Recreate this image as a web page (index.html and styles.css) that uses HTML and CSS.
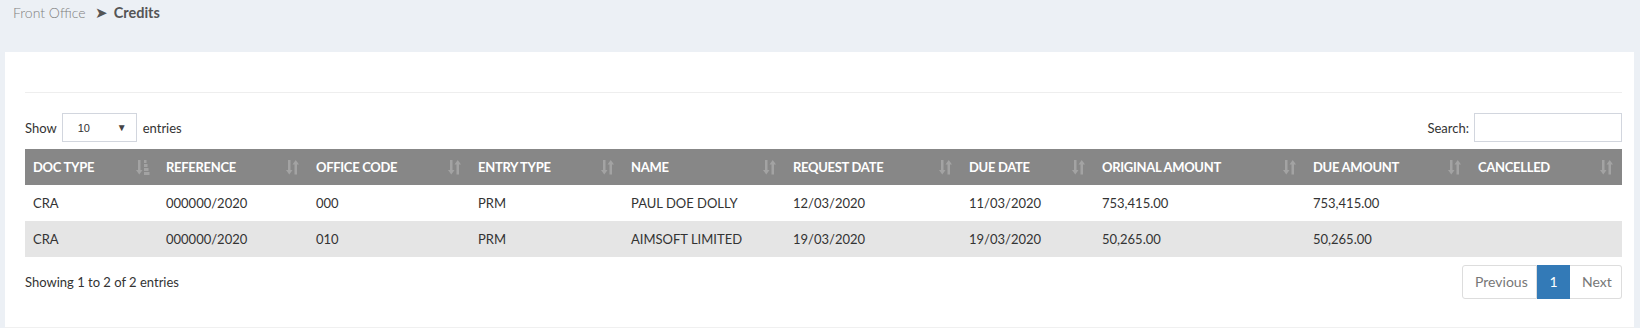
FILE: index.html
```html
<!DOCTYPE html>
<html>
<head>
<meta charset="utf-8">
<link rel="stylesheet" href="styles.css">
</head>
<body>
<div class="crumbs">
  <span class="crumb-link">Front Office</span>
  <span class="crumb-sep">&#10148;</span>
  <span class="crumb-current">Credits</span>
</div>
<div class="card">
  <div class="card-rule"></div>
  <div class="controls">
    <label class="length">Show
      <span class="select"><span>10</span><span class="caret">&#9660;</span></span>
      entries</label>
    <label class="search">Search: <span class="search-input"></span></label>
  </div>
  <table class="grid">
    <colgroup>
      <col style="width:133px"><col style="width:150px"><col style="width:162px"><col style="width:153px"><col style="width:162px"><col style="width:176px"><col style="width:133px"><col style="width:211px"><col style="width:165px"><col style="width:152px">
    </colgroup>
    <thead>
      <tr>
        <th><span>Doc Type</span><svg class="sort" viewBox="0 0 14 16"><path d="M2 1h2.5v10h2l-3.25 4.5-3.25-4.5h2z"/><rect x="8" y="1" width="2.5" height="3"/><rect x="8" y="5" width="3.5" height="3"/><rect x="8" y="9" width="4.5" height="3"/><rect x="8" y="13" width="5.5" height="3"/></svg></th>
        <th><span>Reference</span><svg class="sort" viewBox="0 0 14 16"><path d="M2 1h2.5v10h2l-3.25 4.5-3.25-4.5h2z"/><path d="M11 15.5h-2.5v-10h-2l3.25-4.5 3.25 4.5h-2z"/></svg></th>
        <th><span>Office Code</span><svg class="sort" viewBox="0 0 14 16"><path d="M2 1h2.5v10h2l-3.25 4.5-3.25-4.5h2z"/><path d="M11 15.5h-2.5v-10h-2l3.25-4.5 3.25 4.5h-2z"/></svg></th>
        <th><span>Entry Type</span><svg class="sort" viewBox="0 0 14 16"><path d="M2 1h2.5v10h2l-3.25 4.5-3.25-4.5h2z"/><path d="M11 15.5h-2.5v-10h-2l3.25-4.5 3.25 4.5h-2z"/></svg></th>
        <th><span>Name</span><svg class="sort" viewBox="0 0 14 16"><path d="M2 1h2.5v10h2l-3.25 4.5-3.25-4.5h2z"/><path d="M11 15.5h-2.5v-10h-2l3.25-4.5 3.25 4.5h-2z"/></svg></th>
        <th><span>Request Date</span><svg class="sort" viewBox="0 0 14 16"><path d="M2 1h2.5v10h2l-3.25 4.5-3.25-4.5h2z"/><path d="M11 15.5h-2.5v-10h-2l3.25-4.5 3.25 4.5h-2z"/></svg></th>
        <th><span>Due Date</span><svg class="sort" viewBox="0 0 14 16"><path d="M2 1h2.5v10h2l-3.25 4.5-3.25-4.5h2z"/><path d="M11 15.5h-2.5v-10h-2l3.25-4.5 3.25 4.5h-2z"/></svg></th>
        <th><span>Original Amount</span><svg class="sort" viewBox="0 0 14 16"><path d="M2 1h2.5v10h2l-3.25 4.5-3.25-4.5h2z"/><path d="M11 15.5h-2.5v-10h-2l3.25-4.5 3.25 4.5h-2z"/></svg></th>
        <th><span>Due Amount</span><svg class="sort" viewBox="0 0 14 16"><path d="M2 1h2.5v10h2l-3.25 4.5-3.25-4.5h2z"/><path d="M11 15.5h-2.5v-10h-2l3.25-4.5 3.25 4.5h-2z"/></svg></th>
        <th><span>Cancelled</span><svg class="sort" viewBox="0 0 14 16"><path d="M2 1h2.5v10h2l-3.25 4.5-3.25-4.5h2z"/><path d="M11 15.5h-2.5v-10h-2l3.25-4.5 3.25 4.5h-2z"/></svg></th>
      </tr>
    </thead>
    <tbody>
      <tr>
        <td>CRA</td><td>000000/2020</td><td>000</td><td>PRM</td><td>PAUL DOE DOLLY</td><td>12/03/2020</td><td>11/03/2020</td><td>753,415.00</td><td>753,415.00</td><td></td>
      </tr>
      <tr>
        <td>CRA</td><td>000000/2020</td><td>010</td><td>PRM</td><td>AIMSOFT LIMITED</td><td>19/03/2020</td><td>19/03/2020</td><td>50,265.00</td><td>50,265.00</td><td></td>
      </tr>
    </tbody>
  </table>
  <div class="footer">
    <div class="info">Showing 1 to 2 of 2 entries</div>
    <div class="pager">
      <span class="page">Previous</span><span class="page active">1</span><span class="page">Next</span>
    </div>
  </div>
</div>
</body>
</html>
```
FILE: styles.css
```css
* { box-sizing: border-box; }
html, body { margin: 0; padding: 0; }
body {
  background: #ecf0f5;
  font-family: "Source Sans Pro", Lato, "Liberation Sans", sans-serif;
  font-size: 13px;
  color: #333;
  width: 1640px;
  height: 328px;
  overflow: hidden;
}
.crumbs {
  height: 52px;
  padding: 3px 0 0 13px;
  font-size: 14px;
  line-height: 18px;
  font-family: Lato, "Liberation Sans", sans-serif;
}
.crumb-link { color: #808080; font-weight: 300; }
.crumb-sep { color: #555; margin: 0 2px 0 6px; font-size: 15px; }
.crumb-current { color: #555; font-weight: 700; font-size: 14.5px; }
.card {
  margin: 0 6px 0 5px;
  background: #fff;
  padding: 0 12px 0 20px;
  height: 276px;
  border-bottom: 1px solid #f0f0f0;
}
.card-rule {
  height: 41px;
  border-bottom: 1px solid #eee;
}
.controls {
  display: flex;
  justify-content: space-between;
  align-items: center;
  margin-top: 20px;
  height: 29px;
}
.length, .search { display: flex; align-items: center; }
.select {
  display: inline-flex;
  align-items: center;
  justify-content: space-between;
  width: 75px;
  height: 29px;
  border: 1px solid #d2d6de;
  margin: 0 6px 0 5px;
  padding: 0 9px 0 15px;
  font-size: 11px;
  font-family: "Liberation Sans", Arial, sans-serif;
}
.caret { font-size: 10px; color: #444; }
.search-input {
  display: inline-block;
  width: 148px;
  height: 29px;
  border: 1px solid #d2d6de;
  margin-left: 5px;
}
.grid {
  margin-top: 7px;
  width: 1597px;
  border-collapse: collapse;
  table-layout: fixed;
}
.grid th {
  position: relative;
  background: #878787;
  color: #fff;
  height: 36px;
  padding: 0 8px;
  text-align: left;
  text-transform: uppercase;
  font-weight: 700;
  font-size: 13px;
  letter-spacing: -0.3px;
  white-space: nowrap;
}
.grid th .sort {
  position: absolute;
  right: 8px;
  top: 10px;
  width: 14px;
  height: 16px;
  fill: #a3a3a3;
}
.grid td {
  height: 36px;
  padding: 0 8px;
  font-size: 13px;
  color: #333;
  white-space: nowrap;
}
.grid tbody tr:nth-child(2) td { background: #e5e5e5; }
.footer {
  display: flex;
  justify-content: space-between;
  align-items: center;
  margin-top: 8px;
}
.info { color: #333; }
.pager { display: flex; }
.page {
  height: 34px;
  line-height: 32px;
  border: 1px solid #ddd;
  color: #777;
  padding: 0 12px;
  font-size: 14px;
  background: #fff;
}
.page:first-child { border-radius: 3px 0 0 3px; width: 75px; }
.page:last-child { border-radius: 0 3px 3px 0; border-left: 0; width: 52px; }
.page.active { background: #337ab7; border-color: #337ab7; color: #fff; width: 33px; text-align: center; padding: 0; }
```
